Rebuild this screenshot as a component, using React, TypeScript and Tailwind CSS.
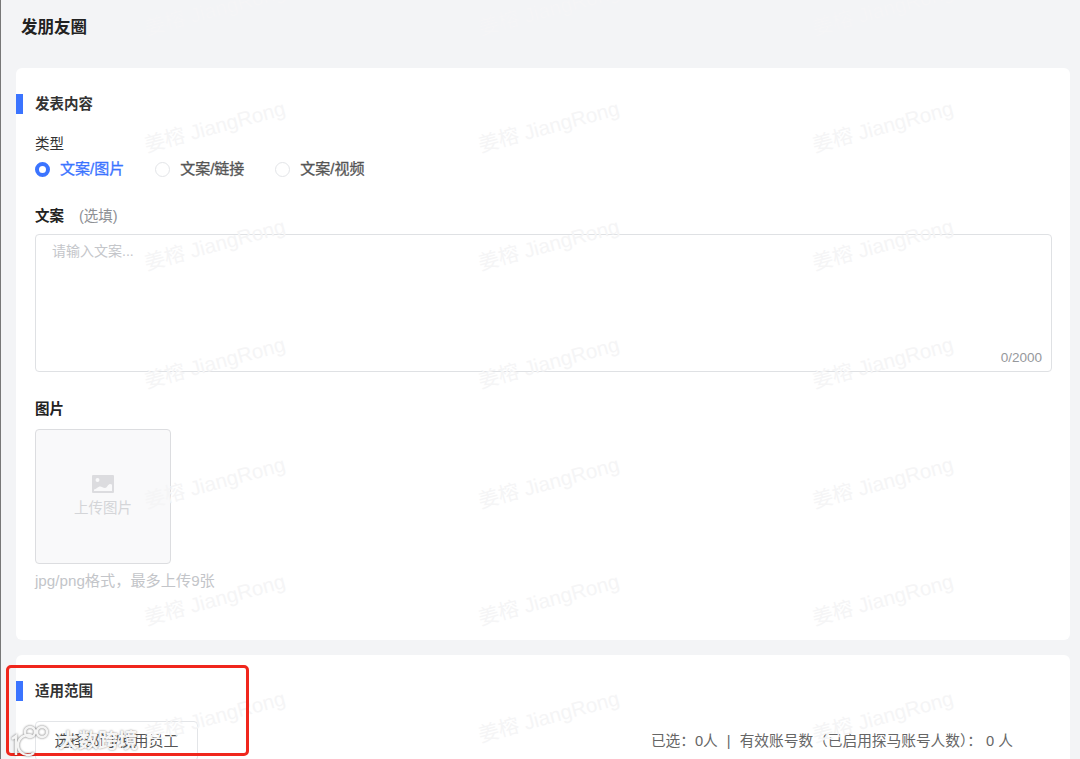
import React from 'react';

const font = { fontFamily: '"Liberation Sans", "Noto Sans CJK SC", sans-serif' };
const markColumns = [215, 549, 883];
const markRows = [10, 127, 245, 363, 483, 600, 717];

const SectionTitle = ({ children }: { children: React.ReactNode }) => (
  <div className="flex items-center h-5">
    <span className="w-[7px] h-5 bg-[#3b74ff]" />
    <span className="ml-3 mt-[2px] text-[14.5px] font-bold text-[#333]">{children}</span>
  </div>
);

const Radio = ({ label, active }: { label: string; active?: boolean }) => (
  <div className="flex items-center">
    {active ? (
      <span className="w-[15px] h-[15px] rounded-full border-[4px] border-[#3b74ff] bg-white" />
    ) : (
      <span className="w-[15px] h-[15px] rounded-full border border-[#e3e5e8] bg-white" />
    )}
    <span
      className={`ml-[10px] text-[15px] [-webkit-text-stroke:0.3px] ${active ? 'text-[#3b74ff]' : 'text-[#555]'}`}
    >
      {label}
    </span>
  </div>
);

export default function App() {
  return (
    <div style={font} className="relative h-[759px] overflow-hidden bg-[#f3f4f6] border-l border-l-[#777]">
      <div className="h-[68px] pl-[20px] pt-[17px] text-[16.5px] leading-5 font-bold text-[#222]">发朋友圈</div>

      <div className="ml-[15px] mr-[10px] h-[572px] bg-white rounded-md pt-[26px]">
        <SectionTitle>发表内容</SectionTitle>
        <div className="pl-[19px] pr-[18px]">
          <div className="mt-[20px] text-[14.5px] leading-5 text-[#333]">类型</div>
          <div className="mt-[5px] flex h-5 gap-[31px]">
            <Radio label="文案/图片" active />
            <Radio label="文案/链接" />
            <Radio label="文案/视频" />
          </div>
          <div className="mt-[27px] flex text-[14.5px] leading-5 font-bold text-[#222]">
            文案
            <span className="ml-[15px] text-[14.5px] font-normal text-[#8e9095]">(选填)</span>
          </div>
          <div className="relative mt-2 h-[138px] rounded border border-[#dfe1e4] px-4 py-[6px] text-sm leading-5 text-[#c4c6ca]">
            请输入文案...
            <span className="absolute right-[9px] bottom-[3px] text-[13.5px] text-[#96989c]">0/2000</span>
          </div>
          <div className="mt-[27px] text-[14.5px] leading-5 font-bold text-[#222]">图片</div>
          <div className="mt-[10px] flex h-[135px] w-[136px] flex-col items-center justify-center rounded border border-[#dcdde0] bg-[#f9f9fa] text-[14.5px] leading-5 text-[#d4d5d8]">
            <svg width="22" height="18" viewBox="0 0 22 18" aria-hidden="true">
              <path fill="#dcdcdf" fillRule="evenodd" d="M1 0h20a1 1 0 0 1 1 1v16a1 1 0 0 1-1 1H1a1 1 0 0 1-1-1V1a1 1 0 0 1 1-1zM5.5 3a2 2 0 1 0 0 4 2 2 0 0 0 0-4zM2 14.500c3-.5 4-3 6-3s3 1.500 5 1.500 3-4 5-4 2 1 2 1V16H2z" />
            </svg>
            <span className="mt-[5px]">上传图片</span>
          </div>
          <div className="mt-[7px] text-[15.2px] leading-5 text-[#c3c5c9]">jpg/png格式，最多上传9张</div>
        </div>
      </div>

      <div className="ml-[15px] mr-[10px] mt-[15px] h-[110px] bg-white rounded-md pt-[26px]">
        <SectionTitle>适用范围</SectionTitle>
        <div className="mt-[20px] flex items-start justify-between pl-[19px] pr-[57px]">
          <div className="flex h-[40px] w-[163px] items-center justify-center rounded-sm border border-[#e3e5e8] text-[15px] text-[#555]">
            选择部门/使用员工
          </div>
          <div className="mt-[10px] flex text-[14.7px] leading-5 text-[#666]">
            <span>已选：0人</span>
            <span className="mx-[9px]">|</span>
            <span>有效账号数（已启用探马账号人数）： 0 人</span>
          </div>
        </div>
      </div>

      {markRows.map((y) =>
        markColumns.map((x) => (
          <span
            key={`${x}-${y}`}
            className="pointer-events-none absolute -translate-x-1/2 -translate-y-1/2 -rotate-[15deg] whitespace-nowrap text-[20.500px] text-[#f5f5f6]"
            style={{ left: x - 1, top: y }}
          >
            姜榕 JiangRong
          </span>
        ))
      )}

      <div className="pointer-events-none absolute left-[5px] top-[665px] h-[91px] w-[243px] rounded-[5px] border-[3px] border-[#f0261c]" />

      <div className="pointer-events-none absolute left-[9px] top-[725px] flex items-start">
        <svg
          width="40"
          height="32"
          viewBox="0 0 40 32"
          fill="none"
          stroke="#f4f4f4"
          strokeWidth="2.500"
          className="[filter:drop-shadow(0_0_1px_rgba(0,0,0,0.55))]"
          aria-hidden="true"
        >
          <path d="M2 14l4-3v19" />
          <path d="M22 11a10 10 0 1 0 2 17" />
          <circle cx="20" cy="7" r="5" />
          <circle cx="32" cy="7" r="5" />
        </svg>
        <span className="ml-2 mt-[2px] text-[20px] leading-7 font-bold text-[#f6f6f6] [text-shadow:0_0_2px_rgba(0,0,0,0.5)]">大数跨境</span>
      </div>
    </div>
  );
}
